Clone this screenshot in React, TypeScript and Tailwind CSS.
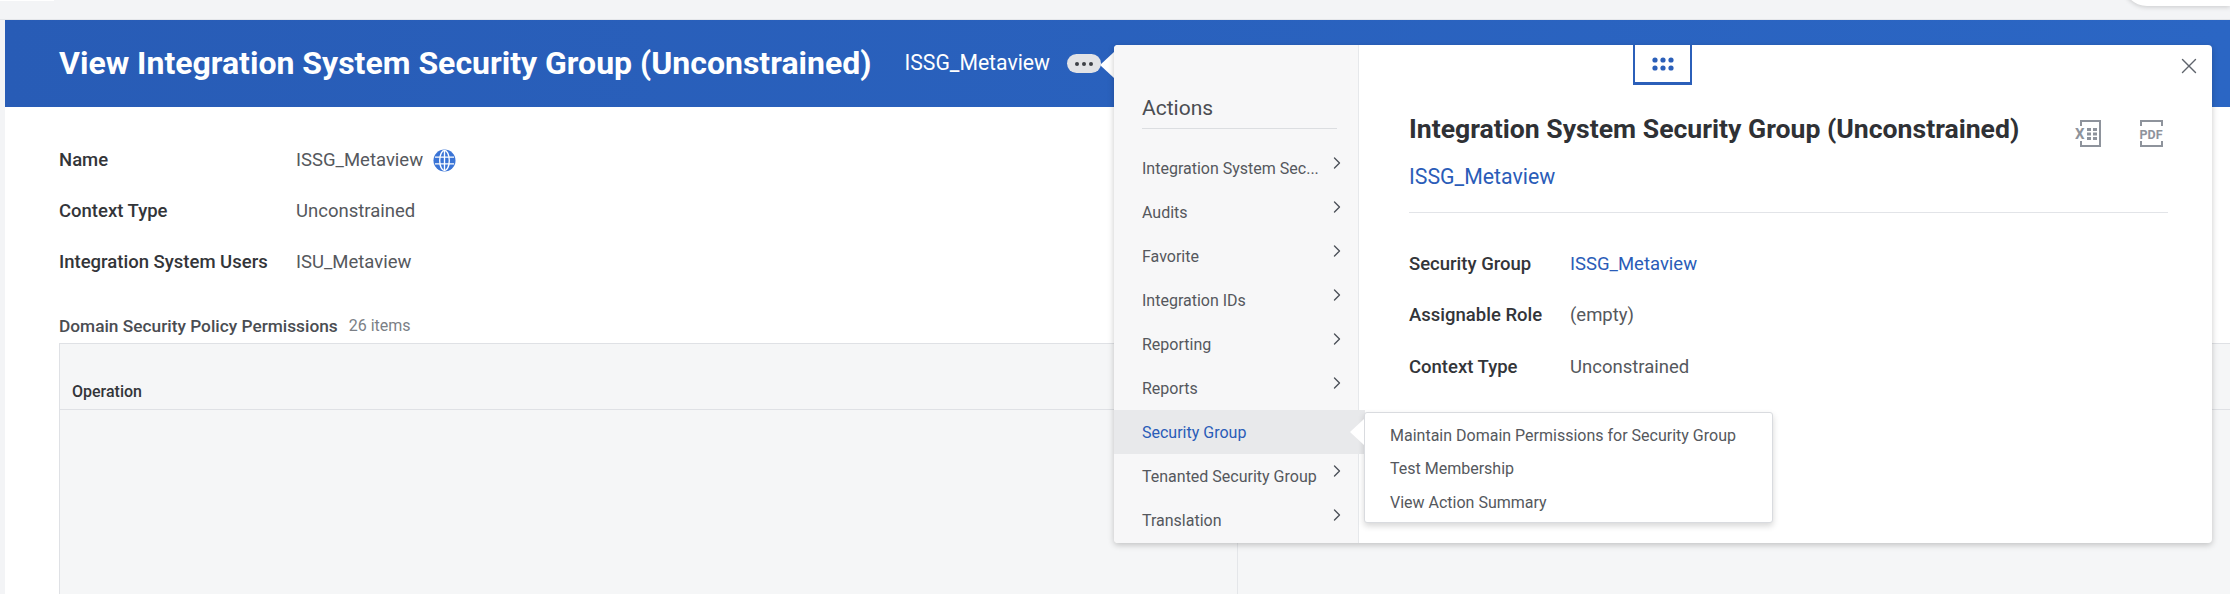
import { ChevronRight, X } from 'lucide-react';

const actions = [
  { label: 'Integration System Security Group', short: 'Integration System Sec...' },
  { label: 'Audits' },
  { label: 'Favorite' },
  { label: 'Integration IDs' },
  { label: 'Reporting' },
  { label: 'Reports' },
  { label: 'Security Group', active: true },
  { label: 'Tenanted Security Group' },
  { label: 'Translation' },
];

function Globe() {
  return (
    <svg width="23" height="23" viewBox="0 0 24 24" className="ml-[10px]">
      <circle cx="12" cy="12" r="11.5" fill="#3a74d6" />
      <g fill="none" stroke="#fff" strokeWidth="1.4">
        <ellipse cx="12" cy="12" rx="5" ry="10.5" />
        <path d="M12 1.5v21M2 8.5h20M2 15.5h20" />
      </g>
    </svg>
  );
}

function ExcelIcon() {
  return (
    <svg width="26" height="27" viewBox="0 0 26 27">
      <g fill="none" stroke="#8e939c" strokeWidth="2">
        <path d="M6 6V1h19v25H6v-5" />
      </g>
      <g fill="#8e939c">
        <rect x="12" y="8" width="4" height="3" />
        <rect x="18" y="8" width="4" height="3" />
        <rect x="12" y="12.5" width="4" height="3" />
        <rect x="18" y="12.5" width="4" height="3" />
        <rect x="12" y="17" width="4" height="3" />
        <rect x="18" y="17" width="4" height="3" />
      </g>
      <text x="0" y="19" fontFamily="Roboto, sans-serif" fontWeight="700" fontSize="15" fill="#8e939c">X</text>
    </svg>
  );
}

function PdfIcon() {
  return (
    <svg width="24" height="27" viewBox="0 0 24 27">
      <path d="M2 6V1h21v5M2 21v5h21v-5" fill="none" stroke="#8e939c" strokeWidth="2" />
      <text x="0.5" y="18.5" textLength="23" lengthAdjust="spacingAndGlyphs" fontFamily="Roboto, sans-serif" fontWeight="700" fontSize="13.5" fill="#8e939c">PDF</text>
    </svg>
  );
}

function DotsTab() {
  return (
    <div className="absolute left-[519px] top-0 flex h-[40px] w-[59px] items-center justify-center border-x-[2px] border-b-[3px] border-[#2b5fb9] bg-white">
      <svg width="22" height="14" viewBox="0 0 22 14">
        <g fill="#2b5fb9">
          <circle cx="3" cy="3" r="2.6" />
          <circle cx="11" cy="3" r="2.6" />
          <circle cx="19" cy="3" r="2.6" />
          <circle cx="3" cy="11" r="2.6" />
          <circle cx="11" cy="11" r="2.6" />
          <circle cx="19" cy="11" r="2.6" />
        </g>
      </svg>
    </div>
  );
}

function ActionsColumn() {
  return (
    <div className="relative w-[245px] shrink-0 border-r border-[#e6e8eb] bg-[#f7f7f8] rounded-l-[4px]">
      <div className="ml-[28px] flex h-[84px] w-[195px] items-end border-b border-[#dcdee1] pb-[7px] text-[21px] leading-[26px] text-[#4a4d52]">
        Actions
      </div>
      <div className="mt-[17px]">
        {actions.map(a => (
          <div
            key={a.label}
            className={`flex h-[44px] items-center pl-[28px] pt-[2px] text-[16px] ${
              a.active ? 'w-[251px] bg-[#e8e9eb] text-[#2a5cb8]' : 'text-[#55585d]'
            }`}
          >
            <span className="w-[185px] whitespace-nowrap">{a.short ?? a.label}</span>
            {!a.active && <ChevronRight size={20} strokeWidth={1.6} className="-mt-[12px] text-[#4b5058]" />}
          </div>
        ))}
      </div>
    </div>
  );
}

function Submenu() {
  return (
    <div className="absolute left-[250px] top-[367px] flex h-[111px] w-[409px] flex-col rounded-[3px] border border-[#d9dbdf] bg-white pl-[25px] pt-[6px] text-[16px] text-[#55585d] shadow-[0_3px_6px_rgba(0,0,0,0.16)]">
      <div className="absolute -left-[15px] top-[6px] h-0 w-0 border-y-[13px] border-r-[14px] border-y-transparent border-r-white" />
      <div className="flex h-[33px] items-center whitespace-nowrap">Maintain Domain Permissions for Security Group</div>
      <div className="flex h-[34px] items-center whitespace-nowrap">Test Membership</div>
      <div className="flex h-[34px] items-center whitespace-nowrap">View Action Summary</div>
    </div>
  );
}

function DetailColumn() {
  return (
    <div className="flex-1 pl-[50px]">
      <div className="w-[759px]">
        <div className="flex h-[168px] flex-col border-b border-[#e2e4e8]">
          <div className="flex justify-between pr-[5px] pt-[66px]">
            <h2 className="text-[26.6px] font-bold leading-[36px] text-[#2f3135] whitespace-nowrap">
              Integration System Security Group (Unconstrained)
            </h2>
            <div className="mt-[9px] flex w-[88px] shrink-0 justify-between">
              <ExcelIcon />
              <PdfIcon />
            </div>
          </div>
          <a className="mt-[16px] text-[21.3px] leading-[28px] text-[#2a5cb8]">ISSG_Metaview</a>
        </div>
        <div className="mt-[26px] grid grid-cols-[161px_1fr] auto-rows-[51.5px] items-center text-[18.5px]">
          <span className="font-medium text-[#333539]">Security Group</span>
          <a className="text-[#2a5cb8]">ISSG_Metaview</a>
          <span className="font-medium text-[#333539]">Assignable Role</span>
          <span className="text-[#55585d]">(empty)</span>
          <span className="font-medium text-[#333539]">Context Type</span>
          <span className="text-[#55585d]">Unconstrained</span>
        </div>
      </div>
    </div>
  );
}

export default function App() {
  return (
    <div className="relative h-[594px] w-[2230px] overflow-hidden bg-[#f3f4f6] font-[Roboto,sans-serif]">
      <div className="flex h-[20px] items-start justify-between border-b border-[#e4e6ea]">
        <div className="h-px w-[54px] bg-white" />
        <div className="-mt-[24px] h-[30px] w-[107px] rounded-bl-[24px] bg-white shadow-[0_1px_5px_rgba(0,0,0,0.18)]" />
      </div>

      <div className="ml-[5px] bg-white">
        <div className="flex h-[87px] items-center bg-linear-to-r from-[#285cb6] to-[#2b66c4] pl-[54px] pb-[2px] text-white">
          <h1 className="text-[32px] font-bold whitespace-nowrap">View Integration System Security Group (Unconstrained)</h1>
          <span className="ml-[33px] text-[21.2px]">ISSG_Metaview</span>
          <button className="ml-[17px] mt-[2px] flex h-[19px] w-[34px] items-center justify-center gap-[3px] rounded-full bg-[#e2e3e6]">
            <span className="h-[4px] w-[4px] rounded-full bg-[#3d4046]" />
            <span className="h-[4px] w-[4px] rounded-full bg-[#3d4046]" />
            <span className="h-[4px] w-[4px] rounded-full bg-[#3d4046]" />
          </button>
        </div>

        <div className="grid grid-cols-[237px_1fr] auto-rows-[51px] items-center pl-[54px] pt-[28px] text-[18.5px]">
          <span className="font-medium text-[#333539]">Name</span>
          <span className="flex items-center text-[#55585d]">ISSG_Metaview<Globe /></span>
          <span className="font-medium text-[#333539]">Context Type</span>
          <span className="text-[#55585d]">Unconstrained</span>
          <span className="font-medium text-[#333539]">Integration System Users</span>
          <span className="text-[#55585d]">ISU_Metaview</span>
        </div>

        <div className="mt-[28px] flex h-[27px] items-start pl-[54px]">
          <span className="text-[17.3px] font-medium leading-[20px] text-[#4a4d52]">Domain Security Policy Permissions</span>
          <span className="ml-[11px] text-[16px] leading-[20px] text-[#7b7f86]">26 items</span>
        </div>

        <div className="ml-[54px] h-[252px] border-l border-t border-[#dfe1e5] bg-[#f5f6f7]">
          <div className="flex h-[66px] items-end border-b border-[#dfe1e5] pb-[5px] pl-[12px] text-[16px] font-medium text-[#333539]">
            Operation
          </div>
          <div className="ml-[1177px] h-full w-px bg-[#e4e6e9]" />
        </div>
      </div>

      <div className="absolute left-[1100px] top-[52px] h-0 w-0 border-y-[13px] border-r-[14px] border-y-transparent border-r-white" />

      <div className="absolute left-[1114px] top-[45px] flex h-[498px] w-[1098px] rounded-[4px] bg-white shadow-[0_2px_6px_rgba(0,0,0,0.22)]">
        <ActionsColumn />
        <DetailColumn />
        <DotsTab />
        <X size={26} strokeWidth={1.3} className="absolute right-[10px] top-[8px] text-[#5f646c]" />
        <Submenu />
      </div>
    </div>
  );
}
